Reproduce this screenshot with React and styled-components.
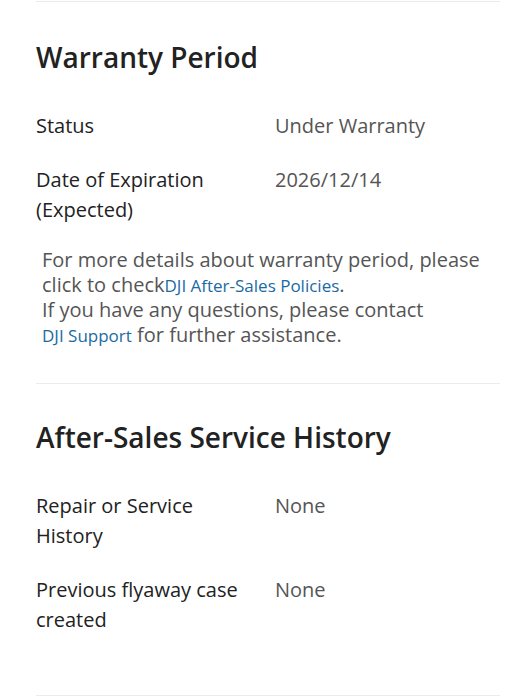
import React from "react";
import styled, { createGlobalStyle } from "styled-components";

const Global = createGlobalStyle`
  html, body { margin: 0; padding: 0; background: #fff; }
  body { font-family: "Open Sans", "Noto Sans", sans-serif; color: #222; }
`;

const Page = styled.div`
  padding: 1px 32px 0 36px;
`;

const Section = styled.section`
  border-top: 1px solid #ececec;
  padding: ${(p) => (p.$first ? "38px" : "36px")} 0 36px;
`;

const Heading = styled.h2`
  margin: 0 0 37px;
  font-size: 28px;
  line-height: 34px;
  font-weight: 600;
  color: #222;
`;

const Row = styled.div`
  display: grid;
  grid-template-columns: 239px 1fr;
  margin-bottom: 24px;
  font-size: 20px;
  line-height: 30px;
`;

const Label = styled.div`
  color: #222;
  padding-right: 16px;
`;

const Value = styled.div`
  color: #555;
`;

const Info = styled.p`
  margin: -2px 0 0;
  padding-left: 6px;
  font-size: 20px;
  line-height: 25px;
  color: #555;
`;

const Link = styled.a`
  display: inline-block;
  color: #1a6aa3;
  font-size: 17px;
  line-height: 1;
  text-decoration: none;
`;

export default function App() {
  return (
    <>
      <Global />
      <Page>
        <Section $first>
          <Heading>Warranty Period</Heading>
          <Row>
            <Label>Status</Label>
            <Value>Under Warranty</Value>
          </Row>
          <Row>
            <Label>Date of Expiration (Expected)</Label>
            <Value>2026/12/14</Value>
          </Row>
          <Info>
            For more details about warranty period, please click to check
            <Link href="#">DJI After-Sales Policies</Link>.
            <br />
            If you have any questions, please contact{" "}
            <Link href="#">DJI Support</Link> for further assistance.
          </Info>
        </Section>
        <Section>
          <Heading>After-Sales Service History</Heading>
          <Row>
            <Label>Repair or Service History</Label>
            <Value>None</Value>
          </Row>
          <Row>
            <Label>Previous flyaway case created</Label>
            <Value>None</Value>
          </Row>
        </Section>
        <Section />
      </Page>
    </>
  );
}
